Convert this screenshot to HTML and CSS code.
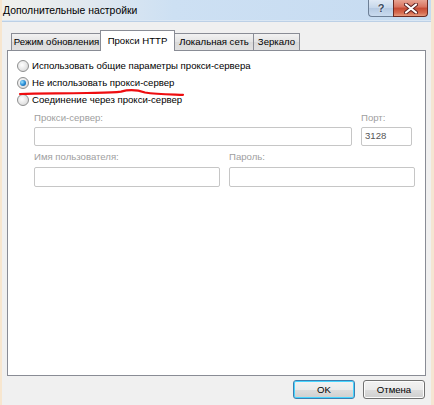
FILE: index.html
```html
<!DOCTYPE html>
<html lang="ru">
<head>
<meta charset="utf-8">
<title>Дополнительные настройки</title>
<link rel="stylesheet" href="styles.css">
</head>
<body>
<div class="window">
  <div class="titlebar">
    <span class="title">Дополнительные настройки</span>
    <div class="caption-buttons">
      <div class="cap-btn help">?</div>
      <div class="cap-btn close">
        <svg width="14" height="11" viewBox="0 0 14 11">
          <path d="M2 1.5 L12 9.5 M12 1.5 L2 9.5" stroke="#5a2020" stroke-width="4" stroke-linecap="round"/>
          <path d="M2 1.5 L12 9.5 M12 1.5 L2 9.5" stroke="#ffffff" stroke-width="2.2" stroke-linecap="round"/>
        </svg>
      </div>
    </div>
  </div>
  <div class="client">
    <div class="tabs">
      <div class="tab t1">Режим обновления</div>
      <div class="tab t2 active">Прокси HTTP</div>
      <div class="tab t3">Локальная сеть</div>
      <div class="tab t4">Зеркало</div>
    </div>
    <div class="panel">
      <div class="radios">
        <div class="radio-row"><span class="radio"></span><span>Использовать общие параметры прокси-сервера</span></div>
        <div class="radio-row"><span class="radio checked"></span><span>Не использовать прокси-сервер</span></div>
        <div class="radio-row"><span class="radio"></span><span>Соединение через прокси-сервер</span></div>
      </div>
      <div class="fields">
        <div class="row row-server">
          <div class="field grow">
            <div class="label">Прокси-сервер:</div>
            <div class="input"></div>
          </div>
          <div class="field port">
            <div class="label">Порт:</div>
            <div class="input">3128</div>
          </div>
        </div>
        <div class="row row-user">
          <div class="field user">
            <div class="label">Имя пользователя:</div>
            <div class="input tall"></div>
          </div>
          <div class="field pass">
            <div class="label">Пароль:</div>
            <div class="input tall"></div>
          </div>
        </div>
      </div>
      <svg class="underline" width="180" height="10" viewBox="0 0 180 10">
        <path d="M3 6 C 20 5.2, 40 5.5, 70 5 C 88 4.6, 96 4.6, 104 3.6 C 112 1.5, 120 1.8, 128 4.5 C 140 6.6, 158 6.4, 166 6.8" fill="none" stroke="#ee0d10" stroke-width="2.2" stroke-linecap="round"/>
      </svg>
    </div>
    <div class="buttons">
      <button class="btn default">OK</button>
      <button class="btn">Отмена</button>
    </div>
  </div>
</div>
</body>
</html>
```
FILE: styles.css
```css
* { box-sizing: border-box; }
html, body { margin: 0; padding: 0; }
body {
  width: 434px;
  height: 405px;
  overflow: hidden;
  font-family: "Liberation Sans", Arial, sans-serif;
  font-size: 9.6px;
  color: #000;
  background: #f0f0f0;
}
.window {
  width: 434px;
  height: 405px;
  display: flex;
  flex-direction: column;
  border-left: 2px solid #f7e6cf;
  border-right: 3px solid #f5e6d2;
  background: #f0f0f0;
}
.titlebar {
  height: 22px;
  display: flex;
  align-items: flex-start;
  justify-content: space-between;
  background: linear-gradient(90deg, #f1f1ec 0%, #e2e9ef 18%, #cde0f3 40%, #c6dbf1 100%);
  border-bottom: 1px solid #bcd0e6;
  box-shadow: inset 0 -1px 0 #dae7f4;
}
.title {
  font-size: 10.4px;
  line-height: 22px;
  padding-left: 1px;
  color: #000;
}
.caption-buttons {
  display: flex;
  margin-right: 3px;
}
.cap-btn {
  height: 17px;
  display: flex;
  align-items: center;
  justify-content: center;
  border: 1px solid #6d7f96;
  border-top: none;
}
.help {
  width: 25px;
  border-radius: 0 0 0 4px;
  background: linear-gradient(#dfe9f5, #c5d6ea 50%, #b5c9e2 51%, #c9dbef);
  color: #3b4a5e;
  font-weight: bold;
  font-size: 11px;
  text-shadow: 0 0 2px #fff;
  border-right: none;
}
.close {
  width: 35px;
  border-radius: 0 0 4px 0;
  border-color: #6b2a22;
  background: linear-gradient(#e8a493, #d8725e 45%, #c64a33 50%, #d66b50 80%, #e59a7e);
}
.client {
  flex: 1;
  display: flex;
  flex-direction: column;
  padding: 8px 5px 0 5px;
}
.tabs {
  display: flex;
  align-items: flex-end;
  height: 20px;
  padding-left: 4px;
  position: relative;
  z-index: 1;
}
.tab {
  height: 17px;
  line-height: 16px;
  text-align: center;
  border: 1px solid #898c95;
  border-bottom: none;
  margin-right: -1px;
  background: linear-gradient(#f2f2f2, #e3e3e3 50%, #d9d9d9 51%, #e1e1e1);
  color: #000;
  white-space: nowrap;
}
.t1 { width: 91px; }
.t2 { width: 75px; }
.t3 { width: 80px; }
.t4 { width: 47px; }
.tab.active {
  height: 21px;
  margin: 0 -1px -1px -1px;
  line-height: 19px;
  background: #fff;
  position: relative;
  z-index: 2;
}
.panel {
  position: relative;
  height: 326px;
  background: #fff;
  border: 1px solid #898c95;
  padding: 6px 0 0 9px;
}
.radios {
  display: flex;
  flex-direction: column;
}
.radio-row {
  height: 17px;
  display: flex;
  align-items: center;
  gap: 3px;
  white-space: nowrap;
}
.radio {
  width: 12px;
  height: 12px;
  border-radius: 50%;
  border: 1px solid #8e8f8f;
  background: radial-gradient(circle at 40% 40%, #ffffff 0%, #e6e6e6 55%, #cfcfcf 100%);
  display: flex;
  align-items: center;
  justify-content: center;
}
.radio.checked::after {
  content: "";
  width: 6px;
  height: 6px;
  border-radius: 50%;
  background: radial-gradient(circle at 35% 35%, #9fe4ff 0%, #2a8fd8 50%, #0b4c8a 100%);
}
.fields {
  padding: 2px 0 0 17px;
  display: flex;
  flex-direction: column;
}
.row {
  display: flex;
}
.row-server { gap: 9px; }
.row-user { gap: 9px; margin-top: 3px; }
.field { display: flex; flex-direction: column; }
.field.grow { width: 318px; }
.field.port { width: 51px; }
.field.user { width: 186px; }
.field.pass { width: 186px; }
.label {
  color: #a0a0a0;
  height: 17px;
  line-height: 15px;
}
.input {
  height: 19px;
  border: 1px solid #c6c6c6;
  border-radius: 2px;
  background: #fff;
  color: #555;
  padding-left: 3px;
  line-height: 16px;
}
.input.tall { height: 20px; margin-top: 1px; }
.underline {
  position: absolute;
  left: 9px;
  top: 37px;
}
.buttons {
  display: flex;
  justify-content: flex-end;
  gap: 8px;
  padding: 4px 1px 0 0;
}
.btn {
  width: 62px;
  height: 19px;
  font-family: inherit;
  font-size: 9.6px;
  color: #000;
  border: 1px solid #707070;
  border-radius: 3px;
  background: linear-gradient(#f2f2f2, #ebebeb 50%, #dddddd 51%, #cfcfcf);
  padding: 0;
  box-shadow: inset 0 0 0 1px #fcfcfc;
}
.btn.default {
  border-color: #3c7fb1;
  box-shadow: inset 0 0 0 1px #48d5ff;
}
```
